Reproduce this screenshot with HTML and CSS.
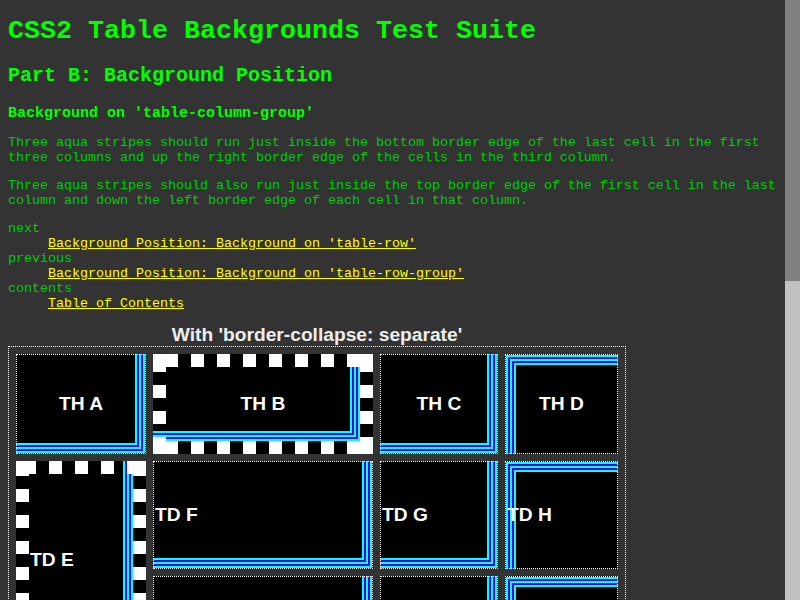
FILE: index.html
```html
<!DOCTYPE html>
<html lang="en">
<head>
<meta charset="utf-8">
<title>CSS2 Table Backgrounds Test Suite: Background on 'table-column-group'</title>
<link rel="stylesheet" href="styles.css">
</head>
<body>
<h1>CSS2 Table Backgrounds Test Suite</h1>
<h2>Part B: Background Position</h2>
<h3>Background on 'table-column-group'</h3>
<p>Three aqua stripes should run just inside the bottom border edge of the last cell in the first three columns and up the right border edge of the cells in the third column.</p>
<p>Three aqua stripes should also run just inside the top border edge of the first cell in the last column and down the left border edge of each cell in that column.</p>
<dl class="nav">
  <dt>next</dt>
  <dd><a href="#">Background Position: Background on 'table-row'</a></dd>
  <dt>previous</dt>
  <dd><a href="#">Background Position: Background on 'table-row-group'</a></dd>
  <dt>contents</dt>
  <dd><a href="#">Table of Contents</a></dd>
</dl>

<table class="test separate">
  <caption>With 'border-collapse: separate'</caption>
  <colgroup span="3"></colgroup>
  <colgroup span="1"></colgroup>
  <thead>
    <tr class="row1">
      <th class="br col1">TH A</th>
      <th class="thick thb col2t">TH B</th>
      <th class="br col3">TH C</th>
      <th class="tl col4">TH D</th>
    </tr>
  </thead>
  <tbody>
    <tr class="row2">
      <td class="thick tde" rowspan="2">TD E</td>
      <td class="br">TD F</td>
      <td class="br">TD G</td>
      <td class="tl">TD H</td>
    </tr>
    <tr class="row3">
      <td class="br">TD J</td>
      <td class="br">TD K</td>
      <td class="tl">TD L</td>
    </tr>
  </tbody>
</table>

<table class="test collapse">
  <caption>With 'border-collapse: collapse'</caption>
  <colgroup span="3"></colgroup>
  <colgroup span="1"></colgroup>
  <thead>
    <tr class="row1">
      <th class="br col1">TH A</th>
      <th class="thick thb col2t">TH B</th>
      <th class="br col3">TH C</th>
      <th class="tl col4">TH D</th>
    </tr>
  </thead>
  <tbody>
    <tr class="row2">
      <td class="thick tde" rowspan="2">TD E</td>
      <td class="br">TD F</td>
      <td class="br">TD G</td>
      <td class="tl">TD H</td>
    </tr>
    <tr class="row3">
      <td class="br">TD J</td>
      <td class="br">TD K</td>
      <td class="tl">TD L</td>
    </tr>
  </tbody>
</table>

<div class="scrollbar" aria-hidden="true"><div class="scrollbar-thumb"></div></div>
</body>
</html>
```
FILE: styles.css
```css
html {
  background: #333;
}
body {
  margin: 8px;
  padding-top: 7.87px;
  background: #333;
  color: #00cc00;
  font-family: "Liberation Mono", monospace;
  font-size: 13.333px;
}
h1, h2, h3 {
  color: #00ff00;
  font-weight: bold;
}
h1 {
  font-size: 26.667px;
  margin: 0 0 0.67em;
}
h2 {
  font-size: 20px;
  margin: 0.83em 0 18.6px;
}
h3 {
  font-size: 15px;
  margin: 15px 0 12.333px;
}
p {
  margin: 1em 0;
}
h3 + p {
  margin-top: 0;
}
.nav {
  margin: 1em 0 12.333px;
}
.nav dd {
  margin-left: 40px;
}
.nav a {
  color: #ffff00;
}

/* ---------- test tables ---------- */
.test {
  border: 1px dotted #fff;
  border-spacing: 7px;
  margin: 0 0 30px;
}
.test caption {
  font: bold 19.2px "Liberation Sans", Arial, sans-serif;
  color: #eee;
}
.test th, .test td {
  --b: 1px;
  --stripe-img:
    linear-gradient(#000, #000),
    linear-gradient(#00ffff, #00ffff),
    linear-gradient(#5c00cc, #5c00cc),
    linear-gradient(#00ffff, #00ffff),
    linear-gradient(#5c00cc, #5c00cc),
    linear-gradient(#00ffff, #00ffff);
  --stripe-size:
    calc(100% - var(--b) - 10px) calc(100% - var(--b) - 10px),
    calc(100% - var(--b) - 8px) calc(100% - var(--b) - 8px),
    calc(100% - var(--b) - 6px) calc(100% - var(--b) - 6px),
    calc(100% - var(--b) - 4px) calc(100% - var(--b) - 4px),
    calc(100% - var(--b) - 2px) calc(100% - var(--b) - 2px),
    calc(100% - var(--b)) calc(100% - var(--b));
  border: 1px dotted #fff;
  padding: 1px;
  font: bold 19.2px "Liberation Sans", Arial, sans-serif;
  color: #fff;
  vertical-align: middle;
  background-color: #000;
  background-origin: border-box;
  background-clip: border-box;
}
.test th {
  text-align: center;
}
.test td {
  text-align: left;
}
.col1 { width: 126px; }
.col2t { width: 192px; }
.col3 { width: 114px; }
.col4 { width: 109px; }
.row1 { height: 100px; }
.row2 { height: 108px; }
.row3 { height: 83px; }

/* stripes anchored at the bottom-right of the padding box */
.br {
  background-image: var(--stripe-img);
  background-size: var(--stripe-size);
  background-repeat: no-repeat;
  background-position: 0 0;
}
/* stripes anchored at the top-left of the padding box */
.tl {
  background-image: var(--stripe-img);
  background-size: var(--stripe-size);
  background-repeat: no-repeat;
  background-position: 100% 100%;
}

/* thick square-dashed border cells */
.test .thick {
  --b: 13px;
  border: 13px solid transparent;
  background-image:
    linear-gradient(#fff, #fff),
    linear-gradient(#fff, #fff),
    linear-gradient(#fff, #fff),
    linear-gradient(#fff, #fff),
    linear-gradient(to right, #fff 0 7px, transparent 7px 20px, #fff 20px 26px),
    linear-gradient(to right, #fff 0 7px, transparent 7px 20px, #fff 20px 26px),
    linear-gradient(to bottom, #fff 0 7px, transparent 7px 20px, #fff 20px 26px),
    linear-gradient(to bottom, #fff 0 7px, transparent 7px 20px, #fff 20px 26px),
    var(--stripe-img);
  background-size:
    13px 13px, 13px 13px, 13px 13px, 13px 13px,
    26px 13px, 26px 13px, 13px 26px, 13px 26px,
    var(--stripe-size);
  background-repeat:
    no-repeat, no-repeat, no-repeat, no-repeat,
    repeat-x, repeat-x, repeat-y, repeat-y,
    no-repeat, no-repeat, no-repeat, no-repeat, no-repeat, no-repeat;
}
.test .thb {
  background-position:
    0 0, 100% 0, 0 100%, 100% 100%,
    96px 0, 96px 100%, 0 37px, 100% 37px,
    0 0, 0 0, 0 0, 0 0, 0 0, 0 0;
}
.test .tde {
  background-position:
    0 0, 100% 0, 0 100%, 100% 100%,
    13px 0, 13px 100%, 0 86px, 100% 86px,
    0 0, 0 0, 0 0, 0 0, 0 0, 0 0;
}

.collapse {
  border-collapse: collapse;
}

/* window scrollbar, drawn over the right edge of the viewport */
.scrollbar {
  position: fixed;
  top: 0;
  right: 0;
  width: 15px;
  height: 100vh;
  background: #c0c0c0;
}
.scrollbar-thumb {
  height: 281px;
  background: #808080;
}
```
